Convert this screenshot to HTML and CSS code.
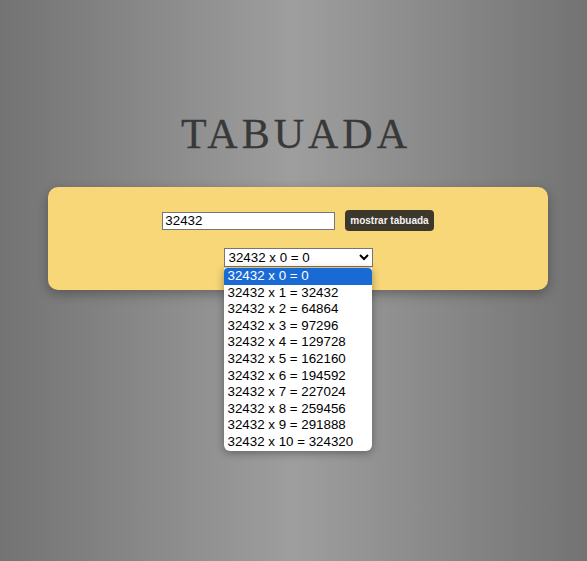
FILE: index.html
```html
<!DOCTYPE html>
<html lang="pt">
<head>
<meta charset="utf-8">
<title>Tabuada</title>
<link rel="stylesheet" href="styles.css">
</head>
<body>
<main class="page">
  <h1 class="title">TABUADA</h1>
  <section class="card">
    <div class="row">
      <input class="num" type="text" value="32432">
      <button class="btn" type="button">mostrar tabuada</button>
    </div>
    <div class="select-wrap">
      <select class="sel">
        <option>32432 x 0 = 0</option>
        <option>32432 x 1 = 32432</option>
        <option>32432 x 2 = 64864</option>
        <option>32432 x 3 = 97296</option>
        <option>32432 x 4 = 129728</option>
        <option>32432 x 5 = 162160</option>
        <option>32432 x 6 = 194592</option>
        <option>32432 x 7 = 227024</option>
        <option>32432 x 8 = 259456</option>
        <option>32432 x 9 = 291888</option>
        <option>32432 x 10 = 324320</option>
      </select>
      <ul class="dropdown">
        <li class="item active">32432 x 0 = 0</li>
        <li class="item">32432 x 1 = 32432</li>
        <li class="item">32432 x 2 = 64864</li>
        <li class="item">32432 x 3 = 97296</li>
        <li class="item">32432 x 4 = 129728</li>
        <li class="item">32432 x 5 = 162160</li>
        <li class="item">32432 x 6 = 194592</li>
        <li class="item">32432 x 7 = 227024</li>
        <li class="item">32432 x 8 = 259456</li>
        <li class="item">32432 x 9 = 291888</li>
        <li class="item">32432 x 10 = 324320</li>
      </ul>
    </div>
  </section>
</main>
</body>
</html>
```
FILE: styles.css
```css
html {
  height: 100%;
}
body {
  margin: 0;
  min-height: 100%;
  background: linear-gradient(to right, #737373 0%, #9e9e9e 50%, #737373 100%);
  font-family: "Liberation Sans", Arial, sans-serif;
}
.page {
  width: 500px;
  margin-left: 48px;
  padding-top: 113px;
}
.title {
  margin: 0 0 32px;
  padding-right: 4px;
  text-align: center;
  font-family: "Liberation Serif", "Times New Roman", serif;
  font-weight: normal;
  font-size: 42px;
  line-height: 42px;
  letter-spacing: 4px;
  color: #383838;
  -webkit-text-stroke: 0.3px #383838;
}
.card {
  background: #f7d778;
  border-radius: 10px;
  box-shadow: 0 4px 12px rgba(0, 0, 0, 0.3);
  padding: 23px 0 23px;
  display: flex;
  flex-direction: column;
  align-items: center;
  gap: 17px;
  height: 103px;
  box-sizing: border-box;
}
.row {
  display: flex;
  align-items: center;
  gap: 10px;
}
.num {
  box-sizing: border-box;
  width: 173px;
  height: 18px;
  margin: 0;
  padding: 0 2px;
  border: 1px solid #767676;
  background: #fff;
  font-family: "Liberation Sans", Arial, sans-serif;
  font-size: 13.33px;
  color: #000;
}
.btn {
  box-sizing: border-box;
  height: 21px;
  padding: 0 5px;
  margin: 0;
  border: none;
  border-radius: 4px;
  background: #3d382c;
  color: #f2f2f2;
  font-family: "Liberation Sans", Arial, sans-serif;
  font-weight: bold;
  font-size: 10px;
}
.select-wrap {
  position: relative;
}
.sel {
  box-sizing: border-box;
  height: 19px;
  width: 149px;
  margin: 0;
  font-family: "Liberation Sans", Arial, sans-serif;
  font-size: 13.33px;
  color: #000;
  background: #fff;
  border: 1px solid #767676;
  display: block;
}
.dropdown {
  position: absolute;
  top: 20px;
  left: 0;
  width: 148px;
  margin: 0;
  padding: 0;
  list-style: none;
  background: #fff;
  border-radius: 0 0 6px 6px;
  box-shadow: 0 2px 8px rgba(0, 0, 0, 0.35);
  font-size: 13.33px;
  color: #000;
  z-index: 2;
}
.item {
  height: 16.6px;
  line-height: 16px;
  padding-left: 4px;
  white-space: nowrap;
}
.item.active {
  background: #1a6ad5;
  color: #fff;
  border-radius: 4px 4px 0 0;
}
```
